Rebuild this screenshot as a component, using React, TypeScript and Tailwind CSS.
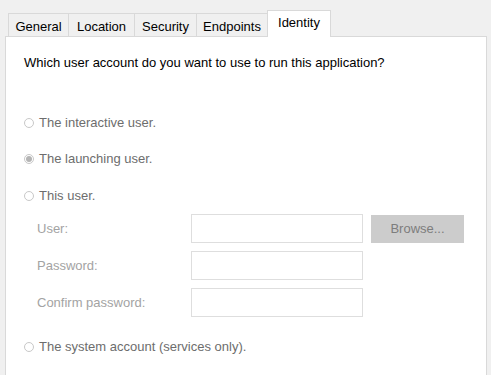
import React from "react";

function Radio({ label, checked }: { label: string; checked?: boolean }) {
  return (
    <div className="flex h-[16px] items-center">
      <span className="flex h-[10px] w-[10px] items-center justify-center rounded-full border border-[#c8c8c8] bg-white">
        {checked && <span className="h-[6px] w-[6px] rounded-full bg-[#b4b4b4]" />}
      </span>
      <span className="ml-[5px] text-[#6d6d6d]">{label}</span>
    </div>
  );
}

function Field({ label, browse }: { label: string; browse?: boolean }) {
  return (
    <div className="flex h-[29px] items-center">
      <span className="w-[154px] text-[#a3a3a3]">{label}</span>
      <div className="h-[29px] w-[172px] border border-[#dedede] bg-white" />
      {browse && (
        <div className="ml-[8px] flex h-[28px] w-[93px] items-center justify-center bg-[#cccccc] text-[#7d7d7d]">
          Browse...
        </div>
      )}
    </div>
  );
}

export default function App() {
  const tabs = [
    { name: "General", w: 61 },
    { name: "Location", w: 67 },
    { name: "Security", w: 63 },
    { name: "Endpoints", w: 72 },
  ];
  return (
    <div
      className="h-[375px] w-[491px] overflow-hidden bg-[#f0f0f0] pl-[5px] pr-[4px] pt-[10px] text-[13px] leading-[16px]"
      style={{ fontFamily: '"Liberation Sans", Arial, sans-serif' }}
    >
      <div className="relative z-10 -mb-px flex h-[27px] items-end pl-[3px]">
        {tabs.map((t, i) => (
          <div
            key={t.name}
            className={`flex h-[24px] items-center justify-center border border-b-0 border-[#d9d9d9] pt-[2px] text-black ${i > 0 ? "-ml-px" : ""}`}
            style={{ width: t.w }}
          >
            {t.name}
          </div>
        ))}
        <div className="-ml-px flex h-[27px] w-[64px] items-start justify-center border border-b-0 border-[#d9d9d9] bg-white pt-[4px] text-black">
          Identity
        </div>
      </div>
      <div className="h-[400px] border border-[#d9d9d9] bg-white pl-[18px] pt-[18px]">
        <div className="text-black">Which user account do you want to use to run this application?</div>
        <div className="mt-[44px]">
          <Radio label="The interactive user." />
        </div>
        <div className="mt-[20px]">
          <Radio label="The launching user." checked />
        </div>
        <div className="mt-[21px]">
          <Radio label="This user." />
        </div>
        <div className="mt-[10px] flex flex-col gap-[8px] pl-[13px]">
          <Field label="User:" browse />
          <Field label="Password:" />
          <Field label="Confirm password:" />
        </div>
        <div className="mt-[22px]">
          <Radio label="The system account (services only)." />
        </div>
      </div>
    </div>
  );
}
